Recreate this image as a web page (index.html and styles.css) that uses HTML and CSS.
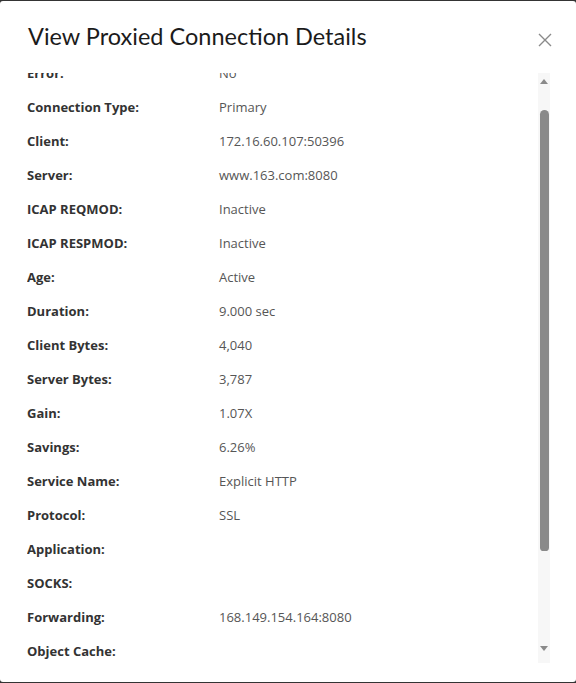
FILE: index.html
```html
<!DOCTYPE html>
<html>
<head>
<meta charset="utf-8">
<link rel="stylesheet" href="styles.css">
</head>
<body>
<div class="modal">
  <div class="header">
    <h1 class="title">View Proxied Connection Details</h1>
    <button class="close" aria-label="Close">
      <svg width="14" height="14" viewBox="0 0 14 14"><path d="M1 1L13 13M13 1L1 13" stroke="#8a8a8a" stroke-width="1.4" fill="none"/></svg>
    </button>
  </div>
  <div class="body">
    <div class="viewport">
      <dl class="list">
        <div class="row"><dt>Error:</dt><dd>No</dd></div>
        <div class="row"><dt>Connection Type:</dt><dd>Primary</dd></div>
        <div class="row"><dt>Client:</dt><dd>172.16.60.107:50396</dd></div>
        <div class="row"><dt>Server:</dt><dd>www.163.com:8080</dd></div>
        <div class="row"><dt>ICAP REQMOD:</dt><dd>Inactive</dd></div>
        <div class="row"><dt>ICAP RESPMOD:</dt><dd>Inactive</dd></div>
        <div class="row"><dt>Age:</dt><dd>Active</dd></div>
        <div class="row"><dt>Duration:</dt><dd>9.000 sec</dd></div>
        <div class="row"><dt>Client Bytes:</dt><dd>4,040</dd></div>
        <div class="row"><dt>Server Bytes:</dt><dd>3,787</dd></div>
        <div class="row"><dt>Gain:</dt><dd>1.07X</dd></div>
        <div class="row"><dt>Savings:</dt><dd>6.26%</dd></div>
        <div class="row"><dt>Service Name:</dt><dd>Explicit HTTP</dd></div>
        <div class="row"><dt>Protocol:</dt><dd>SSL</dd></div>
        <div class="row"><dt>Application:</dt><dd></dd></div>
        <div class="row"><dt>SOCKS:</dt><dd></dd></div>
        <div class="row"><dt>Forwarding:</dt><dd>168.149.154.164:8080</dd></div>
        <div class="row"><dt>Object Cache:</dt><dd></dd></div>
      </dl>
    </div>
    <div class="scrollbar">
      <div class="arrow up"></div>
      <div class="track"><div class="thumb"></div></div>
      <div class="arrow down"></div>
    </div>
  </div>
</div>
</body>
</html>
```
FILE: styles.css
```css
* { box-sizing: border-box; }
html, body { margin: 0; padding: 0; }
body {
  background: #343434;
  width: 576px;
  height: 683px;
  padding: 1px 0;
  font-family: "Open Sans", "Noto Sans", sans-serif;
}
.modal {
  background: #fff;
  height: 681px;
  border-radius: 3px;
  display: flex;
  flex-direction: column;
}
.header {
  display: flex;
  align-items: flex-start;
  justify-content: space-between;
  padding: 21px 24px 0 28px;
  height: 72px;
}
.title {
  margin: 0;
  font-family: "Lato", sans-serif;
  font-weight: 400;
  font-size: 23.5px;
  line-height: 28px;
  color: #1b1b1b;
}
.close {
  background: none;
  border: 0;
  padding: 0;
  margin-top: 11px;
  width: 14px;
  height: 14px;
  display: flex;
}
.body {
  display: flex;
  height: 590px;
  padding-left: 27px;
  padding-right: 26px;
}
.viewport {
  flex: 1;
  overflow: hidden;
}
.list {
  margin: -17px 0 0 0;
}
.row {
  display: flex;
  height: 34px;
  line-height: 34px;
  font-size: 13px;
}
.row dt {
  width: 192px;
  font-weight: 700;
  color: #333;
}
.row dd {
  margin: 0;
  color: #565656;
}
.scrollbar {
  width: 12px;
  background: #f7f7f7;
  display: flex;
  flex-direction: column;
  align-items: center;
}
.arrow {
  width: 0;
  height: 0;
  border-left: 4px solid transparent;
  border-right: 4px solid transparent;
}
.arrow.up {
  margin-top: 6px;
  border-bottom: 5px solid #8a8a8a;
}
.arrow.down {
  margin-bottom: 12px;
  border-top: 5px solid #8a8a8a;
}
.track {
  flex: 1;
  width: 100%;
  display: flex;
  justify-content: center;
  padding-top: 26px;
  padding-bottom: 95px;
}
.thumb {
  width: 9px;
  background: #8a8a8a;
  border-radius: 5px 5px 4px 4px;
  height: 100%;
}
```
